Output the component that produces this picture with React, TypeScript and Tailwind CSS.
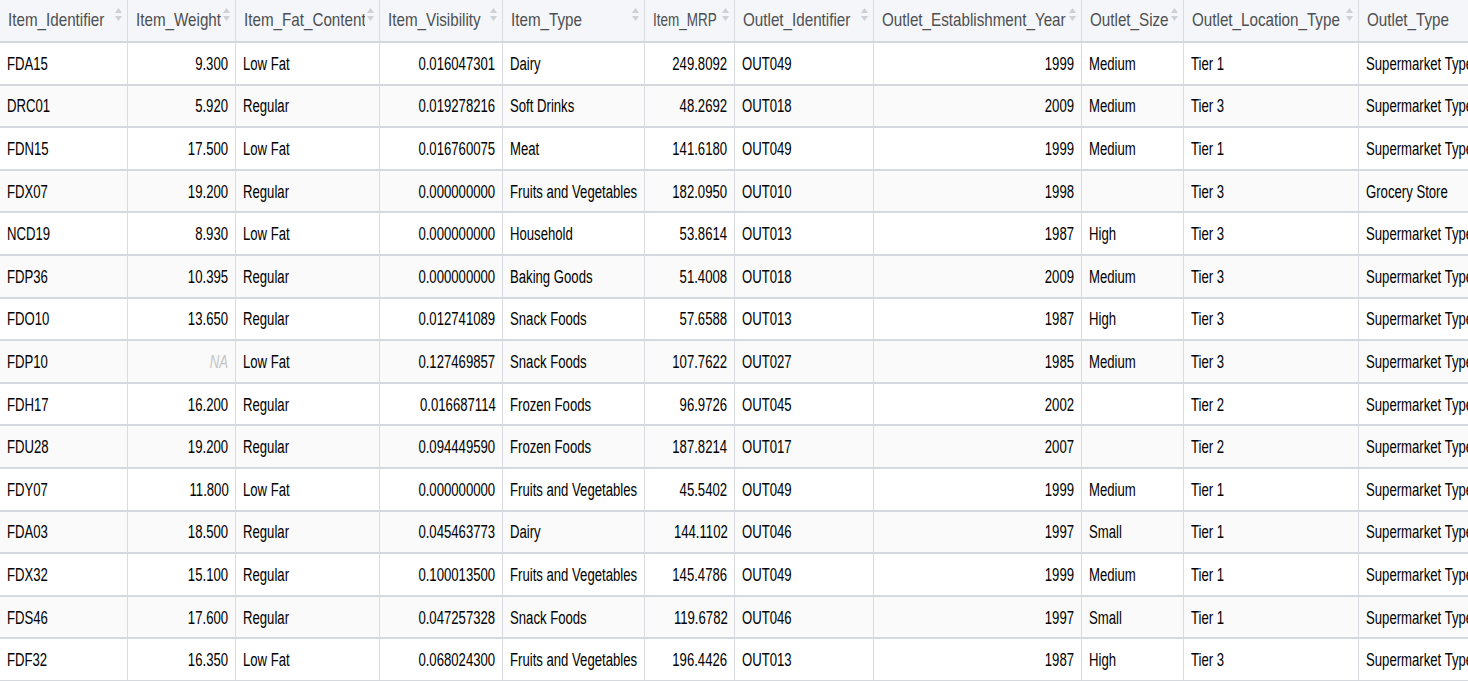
import React from 'react';

type Row = (string | null)[];

const columns: { name: string; width: number; align: 'left' | 'right'; narrow?: boolean }[] = [
    { name: 'Item_Identifier', width: 127, align: 'left' },
    { name: 'Item_Weight', width: 108, align: 'right' },
    { name: 'Item_Fat_Content', width: 144, align: 'left' },
    { name: 'Item_Visibility', width: 123, align: 'right' },
    { name: 'Item_Type', width: 142, align: 'left' },
    { name: 'Item_MRP', width: 90, align: 'right', narrow: true },
    { name: 'Outlet_Identifier', width: 139, align: 'left' },
    { name: 'Outlet_Establishment_Year', width: 208, align: 'right' },
    { name: 'Outlet_Size', width: 102, align: 'left' },
    { name: 'Outlet_Location_Type', width: 175, align: 'left' },
    { name: 'Outlet_Type', width: 190, align: 'left' },
];

const rows: Row[] = [
    ['FDA15', '9.300', 'Low Fat', '0.016047301', 'Dairy', '249.8092', 'OUT049', '1999', 'Medium', 'Tier 1', 'Supermarket Type1'],
    ['DRC01', '5.920', 'Regular', '0.019278216', 'Soft Drinks', '48.2692', 'OUT018', '2009', 'Medium', 'Tier 3', 'Supermarket Type2'],
    ['FDN15', '17.500', 'Low Fat', '0.016760075', 'Meat', '141.6180', 'OUT049', '1999', 'Medium', 'Tier 1', 'Supermarket Type1'],
    ['FDX07', '19.200', 'Regular', '0.000000000', 'Fruits and Vegetables', '182.0950', 'OUT010', '1998', '', 'Tier 3', 'Grocery Store'],
    ['NCD19', '8.930', 'Low Fat', '0.000000000', 'Household', '53.8614', 'OUT013', '1987', 'High', 'Tier 3', 'Supermarket Type1'],
    ['FDP36', '10.395', 'Regular', '0.000000000', 'Baking Goods', '51.4008', 'OUT018', '2009', 'Medium', 'Tier 3', 'Supermarket Type2'],
    ['FDO10', '13.650', 'Regular', '0.012741089', 'Snack Foods', '57.6588', 'OUT013', '1987', 'High', 'Tier 3', 'Supermarket Type1'],
    ['FDP10', null, 'Low Fat', '0.127469857', 'Snack Foods', '107.7622', 'OUT027', '1985', 'Medium', 'Tier 3', 'Supermarket Type3'],
    ['FDH17', '16.200', 'Regular', '0.016687114', 'Frozen Foods', '96.9726', 'OUT045', '2002', '', 'Tier 2', 'Supermarket Type1'],
    ['FDU28', '19.200', 'Regular', '0.094449590', 'Frozen Foods', '187.8214', 'OUT017', '2007', '', 'Tier 2', 'Supermarket Type1'],
    ['FDY07', '11.800', 'Low Fat', '0.000000000', 'Fruits and Vegetables', '45.5402', 'OUT049', '1999', 'Medium', 'Tier 1', 'Supermarket Type1'],
    ['FDA03', '18.500', 'Regular', '0.045463773', 'Dairy', '144.1102', 'OUT046', '1997', 'Small', 'Tier 1', 'Supermarket Type1'],
    ['FDX32', '15.100', 'Regular', '0.100013500', 'Fruits and Vegetables', '145.4786', 'OUT049', '1999', 'Medium', 'Tier 1', 'Supermarket Type1'],
    ['FDS46', '17.600', 'Regular', '0.047257328', 'Snack Foods', '119.6782', 'OUT046', '1997', 'Small', 'Tier 1', 'Supermarket Type1'],
    ['FDF32', '16.350', 'Low Fat', '0.068024300', 'Fruits and Vegetables', '196.4426', 'OUT013', '1987', 'High', 'Tier 3', 'Supermarket Type1'],
];

// little up/down sort triangles in each header cell
const SortArrows: React.FC = () => (
    <svg width="7" height="14" viewBox="0 0 7 14" className="shrink-0 self-start mt-[8px]">
        <path d="M3.5 0 L7 5 L0 5 Z" fill="#cdd0d4" />
        <path d="M3.5 13 L7 8 L0 8 Z" fill="#cdd0d4" />
    </svg>
);

export default function App() {
    return (
        <div className="w-screen h-screen overflow-hidden bg-white font-['Liberation_Sans',Arial,sans-serif]">
            <table className="table-fixed border-collapse w-[1548px]">
                <colgroup>
                    {columns.map((c) => (
                        <col key={c.name} style={{ width: c.width }} />
                    ))}
                </colgroup>
                <thead>
                    <tr className="h-[42px] bg-[#f4f6f9] border-b-2 border-[#d3d6da]">
                        {columns.map((c) => (
                            <th key={c.name} className="border-r border-[#d8dbdf] pl-[8px] pr-[5px] font-normal text-left align-top">
                                <div className="flex h-[40px] items-center gap-[2px]">
                                    <div className="min-w-0 flex-1 overflow-hidden whitespace-nowrap pt-[1px]">
                                        <span
                                            className={`inline-block origin-left text-[19px] text-[#4d4f52] ${
                                                c.narrow ? 'scale-x-[0.71]' : 'scale-x-[0.8]'
                                            }`}
                                        >
                                            {c.name}
                                        </span>
                                    </div>
                                    <SortArrows />
                                </div>
                            </th>
                        ))}
                    </tr>
                </thead>
                <tbody>
                    {rows.map((r, i) => (
                        <tr
                            key={i}
                            className={`h-[42.6px] border-b-2 border-[#d5d8dc] ${i % 2 === 1 ? 'bg-[#fafafa]' : 'bg-white'}`}
                        >
                            {r.map((v, j) => {
                                const right = columns[j].align === 'right';
                                return (
                                    <td
                                        key={j}
                                        className={`border-r border-[#d8dbdf] pl-[7px] pr-[6px] pt-[2px] text-[18px] text-black whitespace-nowrap overflow-hidden ${
                                            right ? 'text-right' : 'text-left'
                                        }`}
                                    >
                                        <span
                                            className={`inline-block scale-x-[0.73] ${right ? 'origin-right' : 'origin-left'} ${
                                                v === null ? 'italic text-[#c4c4c4]' : ''
                                            }`}
                                        >
                                            {v === null ? 'NA' : v}
                                        </span>
                                    </td>
                                );
                            })}
                        </tr>
                    ))}
                </tbody>
            </table>
        </div>
    );
}
